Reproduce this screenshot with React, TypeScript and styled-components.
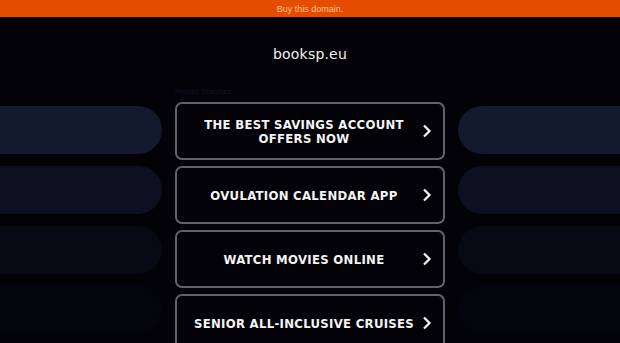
import styled, { createGlobalStyle } from "styled-components";

const GlobalStyle = createGlobalStyle`
  html, body {
    margin: 0;
    padding: 0;
    background: #020207;
    overflow: hidden;
  }
`;

const Page = styled.div`
  width: 620px;
  height: 343px;
  overflow: hidden;
  background: #020207;
  font-family: "DejaVu Sans", Verdana, sans-serif;
`;

const TopBar = styled.div`
  height: 17px;
  background: #e44c00;
  display: flex;
  align-items: center;
  justify-content: center;
  font-family: "Liberation Sans", Arial, sans-serif;
  font-size: 9px;
  color: #f9c28f;
`;

const Title = styled.h1`
  margin: 0;
  padding-top: 29px;
  height: 19px;
  text-align: center;
  font-family: "DejaVu Sans", sans-serif;
  font-weight: 400;
  font-size: 14px;
  letter-spacing: 0.2px;
  color: #f2f2f2;
`;

const Layout = styled.div`
  display: grid;
  grid-template-columns: 162px 270px 162px;
  column-gap: 13px;
  margin-top: 22px;
`;

const SideColumn = styled.div`
  display: flex;
  flex-direction: column;
  gap: 12px;
  padding-top: 19px;
`;

const SideBar = styled.div<{ $shade: string; $side: "left" | "right" }>`
  height: 48px;
  background: ${(p) => p.$shade};
  border-radius: ${(p) => (p.$side === "left" ? "0 24px 24px 0" : "24px 0 0 24px")};
  width: ${(p) => (p.$side === "left" ? "162px" : "200px")};
`;

const Center = styled.div`
  display: flex;
  flex-direction: column;
`;

const Label = styled.div`
  height: 15px;
  font-family: "Liberation Sans", Arial, sans-serif;
  font-size: 7px;
  color: #151726;
  line-height: 10px;
`;

const List = styled.div`
  display: flex;
  flex-direction: column;
  gap: 6px;
`;

const LinkButton = styled.a`
  box-sizing: border-box;
  height: 58px;
  border: 2px solid #626267;
  border-radius: 7px;
  display: flex;
  align-items: center;
  padding: 2px 10px 0 12px;
  color: #f4f4f4;
  text-decoration: none;
  cursor: pointer;
`;

const LinkText = styled.span`
  flex: 1;
  text-align: center;
  font-family: "DejaVu Sans Condensed", "DejaVu Sans", sans-serif;
  font-stretch: condensed;
  font-weight: 700;
  font-size: 13px;
  line-height: 14px;
  letter-spacing: 0.3px;
  text-transform: uppercase;
`;

const Chevron = () => (
  <svg width="12" height="14" viewBox="0 0 12 14" style={{ marginLeft: 2, marginTop: -2 }}>
    <path d="M3 1.5 L8.5 7 L3 12.5" fill="none" stroke="#f4f4f4" strokeWidth="2.2" />
  </svg>
);

const shades = ["#141a2e", "#0d1020", "#070914", "#04050c"];

const links = [
  "The best savings account offers now",
  "Ovulation calendar app",
  "Watch movies online",
  "Senior all-inclusive cruises",
];

export default function App() {
  return (
    <Page>
      <GlobalStyle />
      <TopBar>Buy this domain.</TopBar>
      <Title>booksp.eu</Title>
      <Layout>
        <SideColumn>
          {shades.map((s) => (
            <SideBar key={s} $shade={s} $side="left" />
          ))}
        </SideColumn>
        <Center>
          <Label>Related Searches</Label>
          <List>
            {links.map((l) => (
              <LinkButton key={l}>
                <LinkText>{l}</LinkText>
                <Chevron />
              </LinkButton>
            ))}
          </List>
        </Center>
        <SideColumn>
          {shades.map((s) => (
            <SideBar key={s} $shade={s} $side="right" />
          ))}
        </SideColumn>
      </Layout>
    </Page>
  );
}
